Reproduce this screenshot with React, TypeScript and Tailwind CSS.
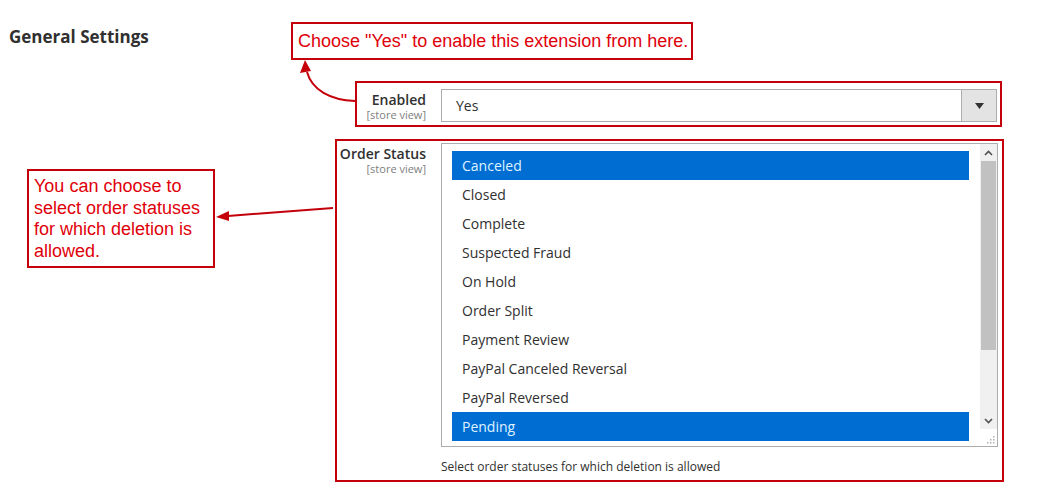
import React from 'react';

const statuses = [
  'Canceled',
  'Closed',
  'Complete',
  'Suspected Fraud',
  'On Hold',
  'Order Split',
  'Payment Review',
  'PayPal Canceled Reversal',
  'PayPal Reversed',
  'Pending',
];

const selected = ['Canceled', 'Pending'];

function FieldLabel({ title, width }: { title: string; width: string }) {
  return (
    <div className={`${width} shrink-0 text-right pt-[2px]`}>
      <div className="text-[14px] leading-[18px] font-semibold text-[#303030]">{title}</div>
      <div className="text-[11px] leading-[12px] text-[#808080]">[store view]</div>
    </div>
  );
}

function Scrollbar() {
  return (
    <div className="w-[17px] shrink-0 flex flex-col">
      <div className="h-[285px] bg-[#f0f0f0] flex flex-col">
        <div className="h-[17px] flex items-center justify-center">
          <svg width="9" height="6" viewBox="0 0 9 6">
            <path d="M1 5 L4.5 1.5 L8 5" fill="none" stroke="#505050" strokeWidth="1.6" />
          </svg>
        </div>
        <div className="h-[189px] mx-[1px] bg-[#c1c1c1]" />
        <div className="flex-1" />
        <div className="h-[17px] flex items-center justify-center">
          <svg width="9" height="6" viewBox="0 0 9 6">
            <path d="M1 1 L4.5 4.5 L8 1" fill="none" stroke="#505050" strokeWidth="1.6" />
          </svg>
        </div>
      </div>
      <div className="flex-1 flex items-end justify-end pr-[2px] pb-[2px]">
        <svg width="8" height="8" viewBox="0 0 8 8">
          <g fill="#b0b0b0">
            <rect x="6" y="0" width="1.5" height="1.5" />
            <rect x="3" y="3" width="1.5" height="1.5" />
            <rect x="6" y="3" width="1.5" height="1.5" />
            <rect x="0" y="6" width="1.5" height="1.5" />
            <rect x="3" y="6" width="1.5" height="1.5" />
            <rect x="6" y="6" width="1.5" height="1.5" />
          </g>
        </svg>
      </div>
    </div>
  );
}

export default function App() {
  return (
    <div className="relative w-[1054px] h-[495px] bg-white overflow-hidden font-['Open_Sans',sans-serif]">
      <div className="h-[81px] pl-[9px] pt-[26px]">
        <h2 className="text-[17px] leading-[22px] font-bold text-[#303030]">General Settings</h2>
      </div>

      <div className="ml-[355px] w-[647px] border-2 border-[#c4000b] pt-[6px] pb-[3px] flex">
        <FieldLabel title="Enabled" width="w-[69px]" />
        <div className="ml-[15px] w-[556px] h-[33px] border border-[#adadad] flex">
          <div className="flex-1 pl-[14px] flex items-center text-[14px] text-[#303030]">Yes</div>
          <div className="w-[35px] bg-[#e3e3e3] border-l border-[#adadad] flex items-center justify-center">
            <svg width="9" height="6" viewBox="0 0 9 6">
              <path d="M0 0 L9 0 L4.5 6 Z" fill="#333" />
            </svg>
          </div>
        </div>
      </div>

      <div className="mt-[12px] ml-[335px] w-[669px] border-2 border-[#c4000b] pt-[2px] pb-[6px] flex">
        <FieldLabel title="Order Status" width="w-[89px]" />
        <div className="ml-[15px]">
          <div className="w-[557px] h-[304px] border border-[#adadad] flex">
            <ul className="flex-1 pt-[7px] pl-[10px] pr-[11px]">
              {statuses.map((s) => {
                const on = selected.includes(s);
                return (
                  <li
                    key={s}
                    className={`h-[29px] pl-[10px] flex items-center text-[14px] ${
                      on ? 'bg-[#006dd3] text-[#dff3ff]' : 'text-[#303030]'
                    }`}
                  >
                    {s}
                  </li>
                );
              })}
            </ul>
            <Scrollbar />
          </div>
          <p className="mt-[13px] text-[12px] leading-[14px] text-[#303030]">
            Select order statuses for which deletion is allowed
          </p>
        </div>
      </div>

      {/* annotations */}
      <div className="absolute left-[291px] top-[22px] w-[402px] h-[38px] border-2 border-[#c4000b] pl-[5px] flex items-center font-['Liberation_Sans',Arial,sans-serif] text-[18px] text-[#e0000a] whitespace-nowrap">
        Choose "Yes" to enable this extension from here.
      </div>

      <div className="absolute left-[27px] top-[169px] w-[188px] h-[99px] border-2 border-[#c4000b] pl-[5px] pt-[5px] font-['Liberation_Sans',Arial,sans-serif] text-[18px] leading-[21.5px] text-[#e0000a]">
        You can choose to select order statuses for which deletion is allowed.
      </div>

      <svg className="absolute left-0 top-0 pointer-events-none" width="1054" height="495" viewBox="0 0 1054 495">
        <path d="M355 101 C 330 100, 312 90, 307 72" fill="none" stroke="#c4000b" strokeWidth="2" />
        <path d="M305 60 L300 73 L311 71 Z" fill="#c4000b" />
        <path d="M333 208 L228 216" fill="none" stroke="#c4000b" strokeWidth="2" />
        <path d="M216 217 L229 211 L229 221 Z" fill="#c4000b" />
      </svg>
    </div>
  );
}
